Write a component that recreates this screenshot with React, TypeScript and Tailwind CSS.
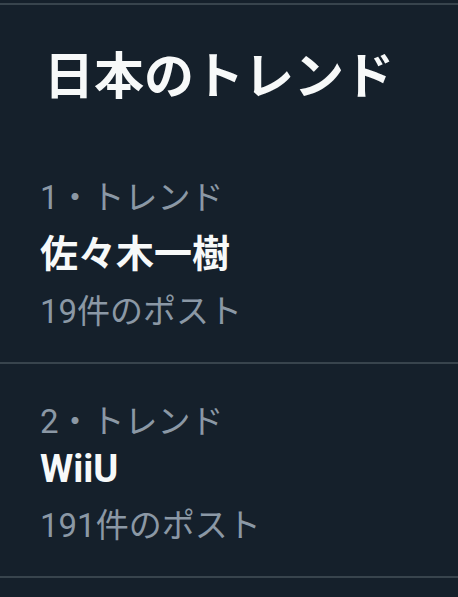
const FONT = "font-['Roboto','Noto_Sans_CJK_JP',sans-serif]"

interface Trend {
  rank: number
  name: string
  posts: string
  cjk?: boolean
}

const TRENDS: Trend[] = [
  { rank: 1, name: '佐々木一樹', posts: '19件のポスト', cjk: true },
  { rank: 2, name: 'WiiU', posts: '191件のポスト' },
]

function TrendItem({ trend }: { trend: Trend }) {
  return (
    <div className="px-[40px] pt-[38px] pb-[20px] border-b-2 border-[#38444d]">
      <p className="text-[33px] leading-[40px] text-[#8b98a5]">{trend.rank}・トレンド</p>
      {/* Japanese names sit a little lower than latin ones */}
      <p className={`${trend.cjk ? 'pt-[9px] pb-px' : ''} text-[38px] leading-[54px] font-bold text-[#f7f9f9]`}>
        {trend.name}
      </p>
      <p className="text-[33px] leading-[60px] text-[#8b98a5]">{trend.posts}</p>
    </div>
  )
}

export default function App() {
  return (
    <div className={`${FONT} w-full h-[597px] overflow-hidden bg-[#15202b] pt-[3px]`}>
      <div className="border-t-2 border-[#38444d]">
        <h2 className="pl-[44px] pr-[40px] pt-[42px] pb-[33px] text-[50px] leading-[60px] font-bold text-[#f7f9f9]">
          日本のトレンド
        </h2>
        {TRENDS.map((t) => (
          <TrendItem key={t.rank} trend={t} />
        ))}
      </div>
    </div>
  )
}
